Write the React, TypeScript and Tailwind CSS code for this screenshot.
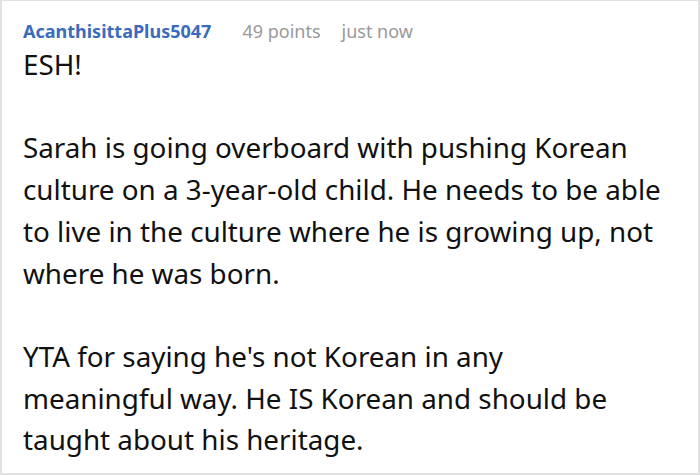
export default function App() {
  return (
    <div
      className="w-[700px] h-[475px] bg-white border-t border-x-2 border-b-2 border-[#e2e2e2] px-[21px] pt-[17px] overflow-hidden"
      style={{ fontFamily: '"Noto Sans", "Open Sans", sans-serif' }}
    >
      <div className="flex items-center h-[26px] text-[18px]">
        <span className="font-bold text-[#3a6bbd]">AcanthisittaPlus5047</span>
        <span className="ml-[31px] text-[#999999]">49 points</span>
        <span className="ml-[21px] text-[#999999]">just now</span>
      </div>
      <div className="w-[648px] text-[27.8px] leading-[41.7px] text-[#111111]">
        <p>ESH!</p>
        <p className="mt-[41.7px]">
          Sarah is going overboard with pushing Korean culture on a 3-year-old child. He
          needs to be able to live in the culture where he is growing up, not where he was
          born.
        </p>
        <p className="mt-[41.7px]">
          YTA for saying he's not Korean in any
          <br />
          meaningful way. He IS Korean and should be taught about his heritage.
        </p>
      </div>
    </div>
  );
}
